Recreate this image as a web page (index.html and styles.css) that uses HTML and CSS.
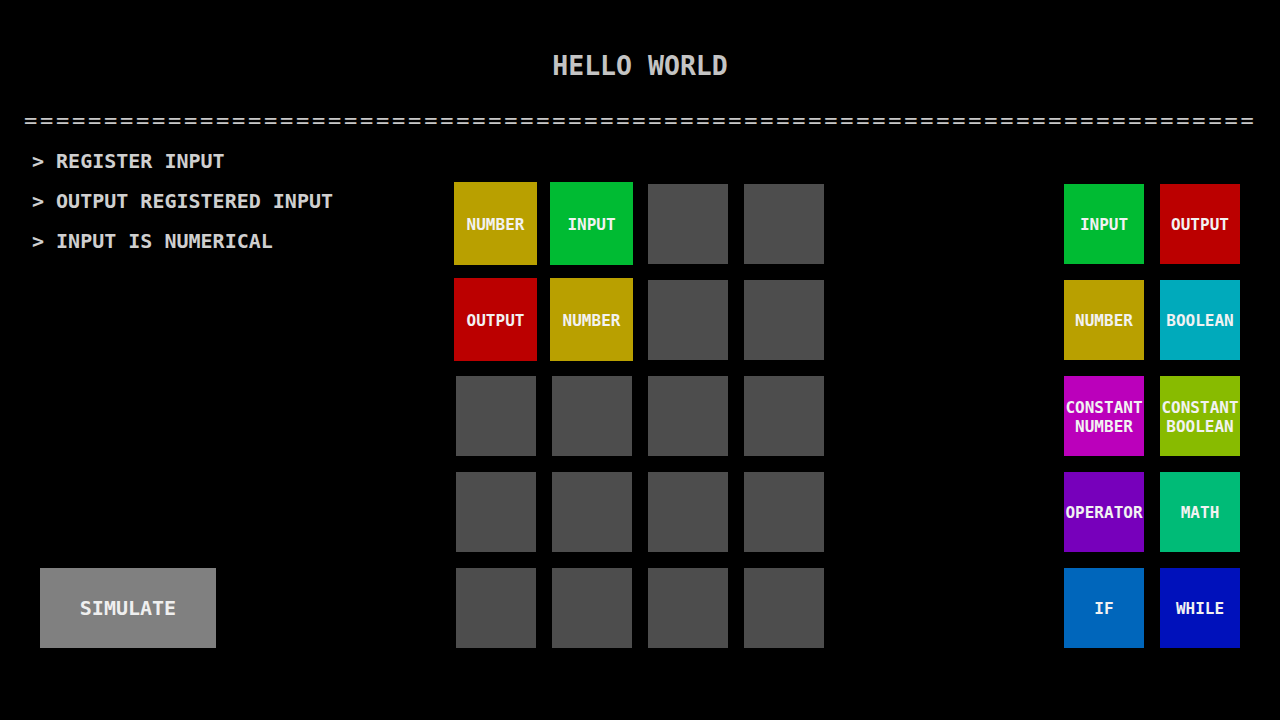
FILE: index.html
```html
<!DOCTYPE html>
<html>
<head>
<meta charset="utf-8">
<title>Hello World</title>
<link rel="stylesheet" href="styles.css">
</head>
<body>
<div class="screen">
  <header class="title">HELLO WORLD</header>
  <div class="divider">=============================================================================</div>
  <main class="main">
    <section class="left">
      <ul class="goals">
        <li>&gt; REGISTER INPUT</li>
        <li>&gt; OUTPUT REGISTERED INPUT</li>
        <li>&gt; INPUT IS NUMERICAL</li>
      </ul>
      <button class="simulate">SIMULATE</button>
    </section>
    <section class="board">
      <div class="tile placed number">NUMBER</div>
      <div class="tile placed input">INPUT</div>
      <div class="cell"></div>
      <div class="cell"></div>
      <div class="tile placed output">OUTPUT</div>
      <div class="tile placed number">NUMBER</div>
      <div class="cell"></div>
      <div class="cell"></div>
      <div class="cell"></div>
      <div class="cell"></div>
      <div class="cell"></div>
      <div class="cell"></div>
      <div class="cell"></div>
      <div class="cell"></div>
      <div class="cell"></div>
      <div class="cell"></div>
      <div class="cell"></div>
      <div class="cell"></div>
      <div class="cell"></div>
      <div class="cell"></div>
    </section>
    <section class="palette">
      <div class="tile input">INPUT</div>
      <div class="tile output">OUTPUT</div>
      <div class="tile number">NUMBER</div>
      <div class="tile boolean">BOOLEAN</div>
      <div class="tile const-number">CONSTANT<br>NUMBER</div>
      <div class="tile const-boolean">CONSTANT<br>BOOLEAN</div>
      <div class="tile operator">OPERATOR</div>
      <div class="tile math">MATH</div>
      <div class="tile if">IF</div>
      <div class="tile while">WHILE</div>
    </section>
  </main>
</div>
</body>
</html>
```

FILE: styles.css
```css
html, body {
  margin: 0;
  padding: 0;
  background: #000;
}

.screen {
  width: 1280px;
  height: 720px;
  background: #000;
  font-family: "DejaVu Sans Mono", "Liberation Mono", monospace;
  color: #c8c8c8;
  overflow: hidden;
}

.title {
  padding-top: 46px;
  height: 40px;
  line-height: 40px;
  font-size: 26.5px;
  font-weight: bold;
  text-align: center;
  color: #c4c4c4;
}

.divider {
  margin-top: 15px;
  height: 40px;
  line-height: 40px;
  font-size: 22px;
  letter-spacing: 2.76px;
  padding-left: 24px;
  white-space: nowrap;
  color: #c8c8c8;
}

.main {
  display: flex;
}

.left {
  width: 456px;
  display: flex;
  flex-direction: column;
}

.goals {
  list-style: none;
  margin: 0;
  padding: 0 0 0 32px;
  font-size: 20px;
  line-height: 40px;
  font-weight: bold;
  color: #cfcfcf;
}

.goals li {
  white-space: pre;
}

.simulate {
  margin-top: auto;
  margin-left: 40px;
  width: 176px;
  height: 80px;
  border: none;
  padding: 0;
  background: #808080;
  color: #efefef;
  font-family: "DejaVu Sans Mono", "Liberation Mono", monospace;
  font-weight: bold;
  font-size: 20px;
}

.board {
  padding-top: 43px;
  display: grid;
  grid-template-columns: repeat(4, 80px);
  grid-template-rows: repeat(5, 80px);
  gap: 16px;
  align-content: start;
}

.palette {
  margin-left: 240px;
  padding-top: 43px;
  display: grid;
  grid-template-columns: repeat(2, 80px);
  grid-template-rows: repeat(5, 80px);
  gap: 16px;
  align-content: start;
}

.cell {
  background: #4d4d4d;
}

.tile {
  display: flex;
  align-items: center;
  justify-content: center;
  text-align: center;
  font-size: 16px;
  line-height: 19px;
  font-weight: bold;
  color: #f2f2f2;
  padding-top: 1px;
}

.tile.placed {
  margin: -2px -1px -1px -2px;
}

.number { background: #b9a000; }
.input { background: #00bb33; }
.output { background: #bb0000; }
.boolean { background: #00aabb; }
.const-number { background: #bb00bb; }
.const-boolean { background: #88bb00; }
.operator { background: #7700bb; }
.math { background: #00bb77; }
.if { background: #0066bb; }
.while { background: #0011bb; }
```
